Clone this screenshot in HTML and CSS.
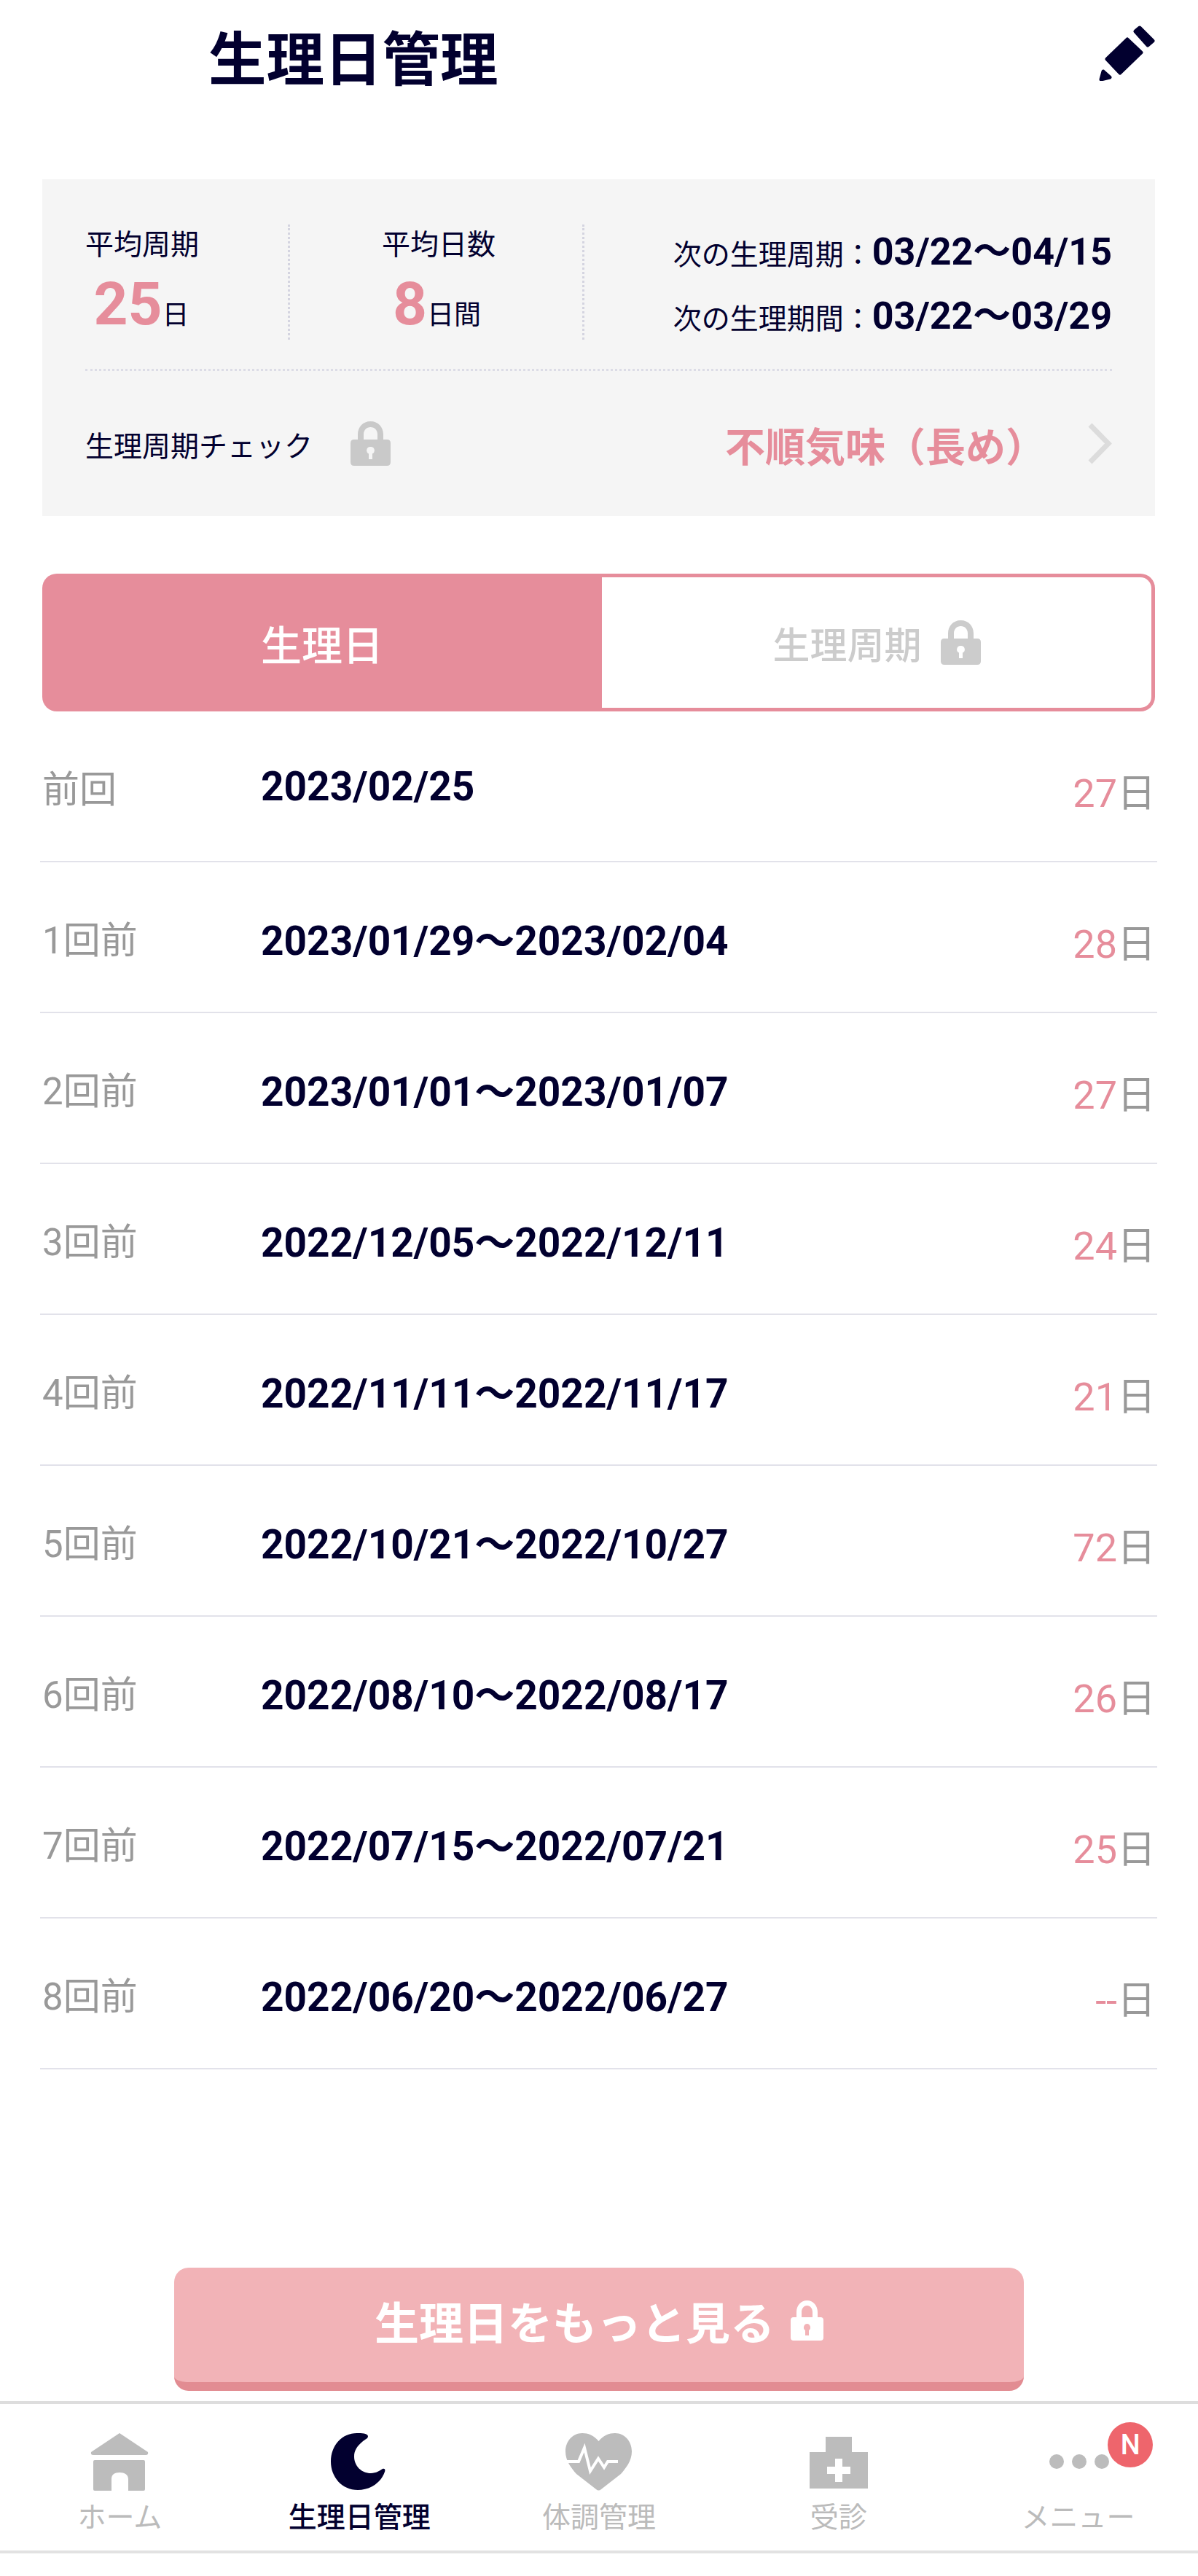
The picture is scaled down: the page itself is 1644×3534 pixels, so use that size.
FILE: index.html
```html
<!DOCTYPE html>
<html lang="ja">
	<head>
		<meta charset="UTF-8">
		<title>生理日管理</title>
		<link rel="stylesheet" href="styles.css">
	</head>
	<body>
		<header class="head">
			<h1 class="title">生理日管理</h1>
			<svg class="pencil" viewBox="0 0 77 77" width="77" height="77">
				<g fill="#02002f" stroke="#02002f" stroke-width="5" stroke-linejoin="round">
					<polygon points="56,4 74,22 67,28 50,9"/>
					<polygon points="39,20 58,38 29,66 11,47"/>
					<polygon points="6,64 15,72 3,75"/>
				</g>
			</svg>
		</header>

		<section class="panel">
			<div class="stats">
				<div class="stat stat-first">
					<p class="stat-label">平均周期</p>
					<p class="stat-value"><b>25</b>日</p>
				</div>
				<div class="stat stat-second">
					<p class="stat-label">平均日数</p>
					<p class="stat-value"><b>8</b>日間</p>
				</div>
				<div class="next">
					<p class="next-row">次の生理周期：<b>03/22〜04/15</b></p>
					<p class="next-row">次の生理期間：<b>03/22〜03/29</b></p>
				</div>
			</div>
			<div class="check">
				<span class="check-label">生理周期チェック</span>
				<svg class="lock" viewBox="0 0 55 61" width="55" height="61"><path fill="#c9c9c9" fill-rule="evenodd" d="M10 25V18C10 8 17 0 27.500 0S45 8 45 18V25H50Q55 25 55 30V56Q55 61 50 61H5Q0 61 0 56V30Q0 25 5 25ZM18 25H37V18C37 12 33 8 27.500 8S18 12 18 18ZM27.500 35A5 5 0 0 0 25 44.500V52H30V44.500A5 5 0 0 0 27.500 35Z"/></svg>
				<span class="check-result">不順気味（長め）</span>
				<svg class="chevron" viewBox="0 0 35 57" width="35" height="57"><polyline points="5,3 30,28.500 5,54" fill="none" stroke="#dcdcdc" stroke-width="7"/></svg>
			</div>
		</section>

		<div class="tabs">
			<div class="tab tab-on">生理日</div>
			<div class="tab tab-off">
				生理周期
				<svg class="tab-lock" viewBox="0 0 55 61" width="55" height="61"><path fill="#cccccc" fill-rule="evenodd" d="M10 25V18C10 8 17 0 27.500 0S45 8 45 18V25H50Q55 25 55 30V56Q55 61 50 61H5Q0 61 0 56V30Q0 25 5 25ZM18 25H37V18C37 12 33 8 27.500 8S18 12 18 18ZM27.500 35A5 5 0 0 0 25 44.500V52H30V44.500A5 5 0 0 0 27.500 35Z"/></svg>
			</div>
		</div>

		<ul class="list">
			<li class="row"><span class="row-name">前回</span><span class="row-date">2023/02/25</span><span class="row-days"><i>27</i>日</span></li>
			<li class="row"><span class="row-name">1回前</span><span class="row-date">2023/01/29〜2023/02/04</span><span class="row-days"><i>28</i>日</span></li>
			<li class="row"><span class="row-name">2回前</span><span class="row-date">2023/01/01〜2023/01/07</span><span class="row-days"><i>27</i>日</span></li>
			<li class="row"><span class="row-name">3回前</span><span class="row-date">2022/12/05〜2022/12/11</span><span class="row-days"><i>24</i>日</span></li>
			<li class="row"><span class="row-name">4回前</span><span class="row-date">2022/11/11〜2022/11/17</span><span class="row-days"><i>21</i>日</span></li>
			<li class="row"><span class="row-name">5回前</span><span class="row-date">2022/10/21〜2022/10/27</span><span class="row-days"><i>72</i>日</span></li>
			<li class="row"><span class="row-name">6回前</span><span class="row-date">2022/08/10〜2022/08/17</span><span class="row-days"><i>26</i>日</span></li>
			<li class="row"><span class="row-name">7回前</span><span class="row-date">2022/07/15〜2022/07/21</span><span class="row-days"><i>25</i>日</span></li>
			<li class="row"><span class="row-name">8回前</span><span class="row-date">2022/06/20〜2022/06/27</span><span class="row-days"><i>--</i>日</span></li>
		</ul>

		<div class="more">
			生理日をもっと見る
			<svg class="more-lock" viewBox="0 0 45 55" width="45" height="55"><path fill="#ffffff" fill-rule="evenodd" d="M8 23V16C8 7 14 0 22.500 0S37 7 37 16V23H41Q45 23 45 27V51Q45 55 41 55H4Q0 55 0 51V27Q0 23 4 23ZM15 23H30V16C30 11 27 7 22.500 7S15 11 15 16ZM22.500 32A5 5 0 0 0 20 41V48H25V41A5 5 0 0 0 22.500 32Z"/></svg>
		</div>

		<nav class="bar">
			<div class="bar-item">
				<svg class="bar-icon" viewBox="0 0 80 80" width="80" height="80">
					<path fill="#bcbcbc" d="M40 0L79 26Q80 30 76 30H4Q0 30 1 26Z"/>
					<path fill="#bcbcbc" fill-rule="evenodd" d="M6 37H73Q75 37 75 39V77Q75 79 73 79H52V63C52 57 47 54 40 54S29 57 29 63V79H6Q4 79 4 77V39Q4 37 6 37Z"/>
				</svg>
				<span class="bar-text">ホーム</span>
			</div>
			<div class="bar-item bar-on">
				<svg class="bar-icon moon" viewBox="0 0 75 80" width="75" height="80">
					<path fill="#02002f" d="M36 0C42 0 50 0 51 4C51 8 47 8 43 12C36 18 32 24 32 32C32 45 42 55 55 55C62 55 68 51 71 49C74 48 75 50 74 53C69 68 54 78 37 78C15 78 0 60 0 39C0 17 15 0 36 0Z"/>
				</svg>
				<span class="bar-text">生理日管理</span>
			</div>
			<div class="bar-item">
				<svg class="bar-icon" viewBox="0 0 91 80" width="91" height="80">
					<path fill="#bcbcbc" d="M45.500 11C39 3 31 0 23 0C10 0 0 11 0 25C0 38 8 48 15 56L42 77Q45.500 80 49 77L76 56C83 48 91 38 91 25C91 11 81 0 68 0C60 0 52 3 45.500 11Z"/>
					<polyline points="0,39 18,39 26,20 34,52 45,35 53,47 58,39 72,39" fill="none" stroke="#ffffff" stroke-width="4"/>
				</svg>
				<span class="bar-text">体調管理</span>
			</div>
			<div class="bar-item">
				<svg class="bar-icon" viewBox="0 0 80 80" width="80" height="80">
					<path fill="#bcbcbc" fill-rule="evenodd" d="M22 5H58V26H80V76H0V26H22ZM35 35V46H24V56H35V67H45V56H56V46H45V35Z"/>
				</svg>
				<span class="bar-text">受診</span>
			</div>
			<div class="bar-item">
				<svg class="bar-icon dots" viewBox="0 0 84 80" width="84" height="80">
					<circle cx="11" cy="39" r="10" fill="#bcbcbc"/>
					<circle cx="42" cy="39" r="10" fill="#bcbcbc"/>
					<circle cx="73" cy="39" r="10" fill="#bcbcbc"/>
				</svg>
				<span class="bar-text">メニュー</span>
				<span class="badge">N</span>
			</div>
		</nav>
	</body>
</html>
```

FILE: styles.css
```css
*{
	margin: 0;
	padding: 0;
	box-sizing: border-box;
}
html,body{
	background: #fff;
}
body{
	width: 1644px;
	height: 3534px;
	overflow: hidden;
	font-family: Roboto, "Noto Sans CJK JP", sans-serif;
	color: #02002f;
}
svg{
	display: block;
	flex: none;
}
i{
	font-style: normal;
}

.head{
	display: flex;
	justify-content: space-between;
	align-items: flex-start;
	height: 246px;
	padding: 34px 59px 0 286px;
}
.title{
	font-size: 79.500px;
	line-height: 98px;
	font-weight: 700;
}

.panel{
	height: 462px;
	margin: 0 59px 0 58px;
	padding: 62px 59px 0;
	background: #f5f5f5;
}
.stats{
	display: flex;
	height: 201px;
	padding-bottom: 40px;
	border-bottom: 3px dotted #dcdce6;
}
.stat{
	width: 281px;
	padding-right: 124px;
	border-right: 3px dotted #d4d4e0;
	text-align: center;
}
.stat-second{
	width: 404px;
	padding: 0 124px 0 126px;
}
.stat-label{
	font-size: 39px;
	line-height: 56px;
	white-space: nowrap;
}
.stat-value{
	margin-top: 8px;
	font-size: 37px;
	line-height: 90px;
	white-space: nowrap;
}
.stat-value b{
	font-size: 82px;
	color: #e68d9b;
}
.next{
	flex: 1;
	display: flex;
	flex-direction: column;
	justify-content: center;
	align-items: flex-end;
	padding-top: 6px;
}
.next-row{
	height: 88px;
	font-size: 39px;
	line-height: 88px;
	white-space: nowrap;
}
.next-row b{
	font-size: 52px;
}
.check{
	display: flex;
	align-items: center;
	height: 199px;
}
.check-label{
	font-size: 39px;
	white-space: nowrap;
}
.lock{
	margin-left: 52px;
}
.check-result{
	margin-left: auto;
	margin-right: 56px;
	font-size: 55px;
	font-weight: 700;
	color: #e68d9b;
	white-space: nowrap;
}

.tabs{
	display: flex;
	height: 189px;
	margin: 79px 59px 0 58px;
	font-weight: 500;
}
.tab{
	display: flex;
	align-items: center;
	justify-content: center;
}
.tab-on{
	width: 768px;
	background: #e68d9b;
	color: #fff;
	border-radius: 20px 0 0 20px;
	font-size: 56px;
}
.tab-off{
	flex: 1;
	gap: 26px;
	border: 5px solid #e68d9b;
	border-left: 0;
	border-radius: 0 20px 20px 0;
	color: #ccc;
	font-size: 51px;
}

.list{
	list-style: none;
	margin: 0 56px 0 55px;
}
.row{
	display: flex;
	align-items: center;
	height: 207px;
	padding: 0 2px 0 3px;
	border-bottom: 2px solid #e2e2ea;
}
.row-name{
	width: 300px;
	font-size: 51px;
	color: #999;
}
.row-date{
	font-size: 55px;
	font-weight: 700;
	white-space: nowrap;
}
.row-days{
	margin-left: auto;
	padding-top: 10px;
	font-size: 53px;
	color: #999;
}
.row-days i{
	font-size: 54px;
	color: #e68d9b;
}

.more{
	display: flex;
	align-items: center;
	justify-content: center;
	gap: 22px;
	width: 1166px;
	height: 169px;
	margin: 272px auto 0;
	padding-bottom: 12px;
	background: #f2b3b7;
	border-bottom: 12px solid #e28c92;
	border-radius: 20px;
	font-size: 61px;
	font-weight: 700;
	color: #fff;
}

.bar{
	display: flex;
	height: 209px;
	margin-top: 14px;
	border-top: 4px solid #ddd;
	border-bottom: 4px solid #e2e2e2;
}
.bar-item{
	position: relative;
	flex: 1;
	display: flex;
	flex-direction: column;
	align-items: center;
	padding-top: 40px;
	color: #bbb;
}
.bar-on{
	color: #02002f;
}
.moon{
	margin-right: 4px;
}
.dots{
	margin-left: 3px;
}
.bar-text{
	margin-top: 8px;
	font-size: 39px;
	line-height: 56px;
	white-space: nowrap;
}
.bar-on .bar-text{
	font-weight: 500;
}
.badge{
	position: absolute;
	top: 25px;
	left: 205px;
	width: 62px;
	height: 62px;
	border-radius: 50%;
	background: #ee656c;
	color: #fff;
	font-size: 38px;
	font-weight: 500;
	line-height: 62px;
	text-align: center;
}
```
